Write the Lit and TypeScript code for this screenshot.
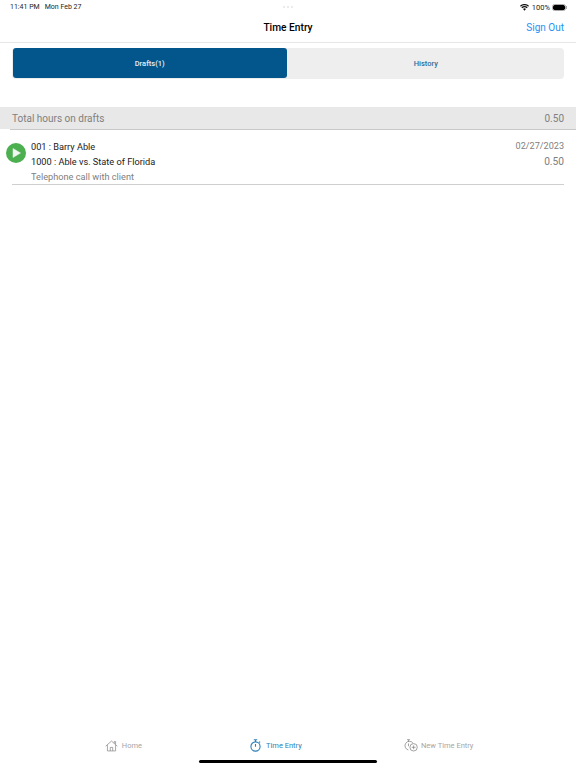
import { LitElement, html, css } from "lit";
import { customElement } from "lit/decorators.js";

@customElement("app-root")
export class AppRoot extends LitElement {
  static styles = css`
    :host {
      display: flex;
      flex-direction: column;
      width: 576px;
      height: 768px;
      overflow: hidden;
      position: relative;
      background: #fff;
      font-family: Roboto, "Liberation Sans", sans-serif;
      color: #000;
    }
    .status {
      height: 14px;
      display: flex;
      align-items: center;
      justify-content: space-between;
      padding: 0 9px 0 10px;
      font-size: 7px;
      color: #222;
    }
    .status-left { display: flex; gap: 5px; }
    .status-right { display: flex; align-items: center; gap: 3px; }
    .status-right span { font-size: 7.5px; }
    .dots { display: flex; gap: 2px; position: absolute; left: 283px; top: 6px; }
    .dots i { width: 2px; height: 2px; border-radius: 50%; background: #e4e4e4; }
    .battery { display: flex; align-items: center; }
    .battery-body { width: 12px; height: 5px; background: #000; border-radius: 1.5px; outline: 1px solid #aaa; }
    .battery-tip { width: 1px; height: 3px; background: #aaa; margin-left: 1px; }
    .nav {
      height: 27px;
      padding: 0 12px 1px;
      display: grid;
      grid-template-columns: 1fr auto 1fr;
      align-items: center;
      border-bottom: 1px solid #e6e6e6;
    }
    .title { grid-column: 2; font-size: 10.2px; font-weight: 500; }
    .signout { grid-column: 3; justify-self: end; font-size: 10px; color: #2491f5; }
    .tabs {
      display: flex;
      align-items: center;
      margin: 4.5px 12px 0;
      padding-left: 0.7px;
      height: 31.5px;
      background: #eeeeee;
      border-radius: 4px;
      font-size: 7.5px;
      font-weight: 500;
    }
    .tab { display: flex; align-items: center; justify-content: center; height: 30px; border-radius: 3px; }
    .tab.on { width: 274px; background: #02568c; color: #e6eff5; }
    .tab.off { flex: 1; color: #2f6f9a; padding-left: 1px; }
    .summary {
      margin-top: 28px;
      height: 22px;
      background: #e8e8e8;
      display: flex;
      align-items: center;
      justify-content: space-between;
      padding: 0 12px;
      font-size: 10px;
      color: #808080;
    }
    .rule { height: 1px; background: #c8c8c8; margin-left: 10px; }
    .row {
      display: flex;
      margin: 0 12px;
      height: 54px;
      border-bottom: 1px solid #cfcfcf;
      position: relative;
      padding-left: 19px;
    }
    .play { position: absolute; left: -6px; top: 13px; width: 20px; height: 20px; }
    .main { flex: 1; padding-top: 9px; display: flex; flex-direction: column; font-size: 9.2px; }
    .main div { height: 15px; line-height: 15px; color: #1a1a1a; }
    .main div.desc { color: #808080; }
    .side { text-align: right; padding-top: 9px; color: #808080; }
    .date { height: 15px; line-height: 15px; font-size: 9.1px; }
    .hours { height: 15px; line-height: 15px; font-size: 10.2px; }
    .spacer { flex: 1; }
    .tabbar {
      height: 44px;
      display: grid;
      grid-template-columns: 250px 100px 1fr;
      font-size: 7.5px;
      color: #a6a6a6;
    }
    .item { display: flex; align-items: center; gap: 4px; height: 43px; }
    .item:nth-child(1) { justify-content: flex-end; padding-right: 108px; }
    .item:nth-child(2) { color: #2d7fb8; gap: 5px; }
    .item:nth-child(3) { padding-left: 54px; gap: 3px; }
    .home-ind {
      position: absolute;
      left: 199px;
      top: 760px;
      width: 178px;
      height: 3px;
      border-radius: 2px;
      background: #000;
    }
  `;

  render() {
    return html`
      <div class="status">
        <div class="status-left"><span>11:41 PM</span><span>Mon Feb 27</span></div>
        <div class="status-right">
          <svg width="9" height="7" viewBox="0 0 10 7">
            <path d="M5 7 3.4 5.2a2.3 2.3 0 0 1 3.2 0ZM2.5 4.3 1.5 3.2a5 5 0 0 1 7 0L7.5 4.3a3.6 3.6 0 0 0-5 0ZM.9 2.6 0 1.6a7.2 7.2 0 0 1 10 0l-.9 1a6 6 0 0 0-8.2 0Z" fill="#111"/>
          </svg>
          <span>100%</span>
          <div class="battery"><div class="battery-body"></div><div class="battery-tip"></div></div>
        </div>
      </div>
      <div class="dots"><i></i><i></i><i></i></div>
      <div class="nav">
        <div class="title">Time Entry</div>
        <div class="signout">Sign Out</div>
      </div>
      <div class="tabs">
        <div class="tab on">Drafts(1)</div>
        <div class="tab off">History</div>
      </div>
      <div class="summary"><span>Total hours on drafts</span><span>0.50</span></div>
      <div class="rule"></div>
      <div class="row">
        <svg class="play" viewBox="0 0 20 20">
          <circle cx="10" cy="10" r="10" fill="#4caf50"/>
          <path d="M7 5.5 14.5 10 7 14.5Z" fill="#f2f7f2" stroke="#f2f7f2" stroke-width="0.5" stroke-linejoin="round"/>
        </svg>
        <div class="main">
          <div>001 : Barry Able</div>
          <div>1000 : Able vs. State of Florida</div>
          <div class="desc">Telephone call with client</div>
        </div>
        <div class="side">
          <div class="date">02/27/2023</div>
          <div class="hours">0.50</div>
        </div>
      </div>
      <div class="spacer"></div>
      <div class="tabbar">
        <div class="item">
          <svg width="13" height="12" viewBox="0 0 14 12" fill="none" stroke="#8a8a8a" stroke-width="0.8">
            <path d="M.7 6.2 7 .7l6.3 5.5M2.6 5v6.3h8.8V5M5.7 11.3V7.5h2.6v3.8M10 3V1.2h1.4v3"/>
          </svg>
          <span>Home</span>
        </div>
        <div class="item">
          <svg width="11" height="13" viewBox="0 0 11 13" fill="none" stroke="#2d7fb8" stroke-width="1.1">
            <circle cx="5.5" cy="7.5" r="4.6"/>
            <path d="M3.8 .7h3.4M5.5 1v2M5.5 5v2.8M9.2 2.6l.9.9"/>
          </svg>
          <span>Time Entry</span>
        </div>
        <div class="item">
          <svg width="14" height="13" viewBox="0 0 14 13" fill="none" stroke="#8a8a8a" stroke-width="0.8">
            <path d="M9 4.2A4.4 4.4 0 1 0 4.4 11M3 .7h3M4.5.9v2M4.5 4.5v2.7"/>
            <circle cx="9.6" cy="8.3" r="3.7"/>
            <path d="M9.6 6.4v3.8M7.7 8.3h3.8"/>
          </svg>
          <span>New Time Entry</span>
        </div>
      </div>
      <div class="home-ind"></div>
    `;
  }
}
